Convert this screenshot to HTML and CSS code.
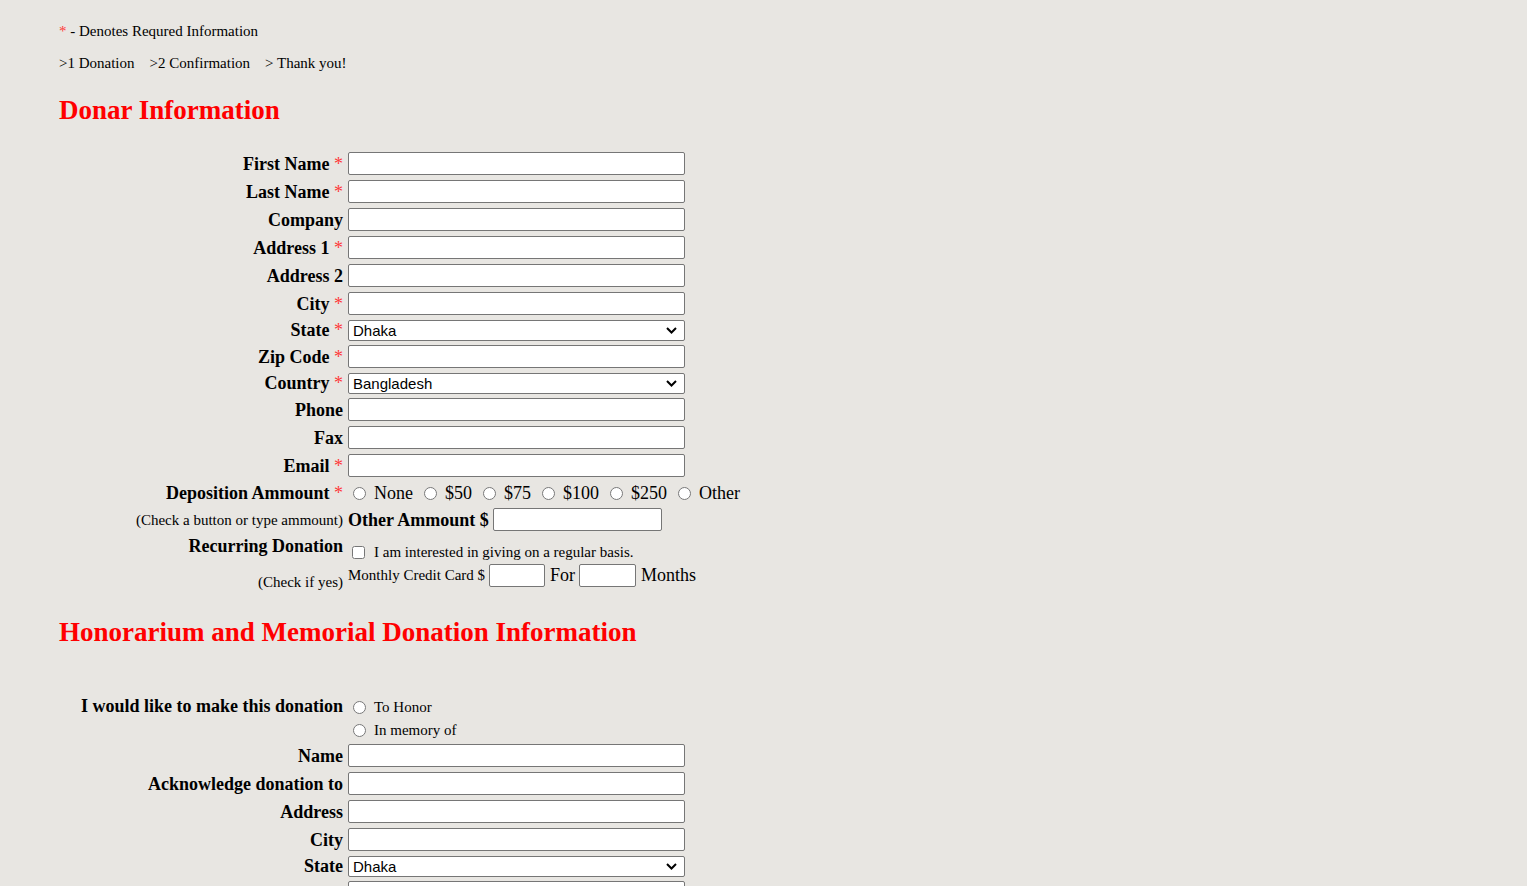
FILE: index.html
```html
<!DOCTYPE html>
<html lang="en">
<head>
<meta charset="utf-8">
<title>Donation</title>
<link rel="stylesheet" href="styles.css">
</head>
<body>
<div class="page">
  <p class="note"><span class="req">*</span> - Denotes Requred Information</p>
  <nav class="steps"><span>&gt;1 Donation</span><span>&gt;2 Confirmation</span><span>&gt; Thank you!</span></nav>

  <h2 class="section-title">Donar Information</h2>
  <div class="form-grid first-grid">
    <label class="lbl">First Name <span class="req">*</span></label><div class="ctl"><input class="txt" type="text"></div>
    <label class="lbl">Last Name <span class="req">*</span></label><div class="ctl"><input class="txt" type="text"></div>
    <label class="lbl">Company</label><div class="ctl"><input class="txt" type="text"></div>
    <label class="lbl">Address 1 <span class="req">*</span></label><div class="ctl"><input class="txt" type="text"></div>
    <label class="lbl">Address 2</label><div class="ctl"><input class="txt" type="text"></div>
    <label class="lbl">City <span class="req">*</span></label><div class="ctl"><input class="txt" type="text"></div>
    <label class="lbl">State <span class="req">*</span></label><div class="ctl"><select class="sel"><option>Dhaka</option></select></div>
    <label class="lbl">Zip Code <span class="req">*</span></label><div class="ctl"><input class="txt" type="text"></div>
    <label class="lbl">Country <span class="req">*</span></label><div class="ctl"><select class="sel"><option>Bangladesh</option></select></div>
    <label class="lbl">Phone</label><div class="ctl"><input class="txt" type="text"></div>
    <label class="lbl">Fax</label><div class="ctl"><input class="txt" type="text"></div>
    <label class="lbl">Email <span class="req">*</span></label><div class="ctl"><input class="txt" type="text"></div>

    <label class="lbl">Deposition Ammount <span class="req">*</span></label>
    <div class="ctl options">
      <label class="opt"><input type="radio" name="amt">None</label>
      <label class="opt"><input type="radio" name="amt">$50</label>
      <label class="opt"><input type="radio" name="amt">$75</label>
      <label class="opt"><input type="radio" name="amt">$100</label>
      <label class="opt"><input type="radio" name="amt">$250</label>
      <label class="opt"><input type="radio" name="amt">Other</label>
    </div>

    <span class="lbl hint">(Check a button or type ammount)</span>
    <div class="ctl other"><span class="inline-lbl">Other Ammount $</span><input class="txt w169" type="text"></div>

    <div class="lbl stack"><span>Recurring Donation</span><span class="hint">(Check if yes)</span></div>
    <div class="recur">
      <label class="recur-line"><input type="checkbox" class="chk">I am interested in giving on a regular basis.</label>
      <div class="monthly">
        <span class="small">Monthly Credit Card $</span><input class="txt w56" type="text"><span class="big">For</span><input class="txt w57" type="text"><span class="big">Months</span>
      </div>
    </div>
  </div>

  <h2 class="section-title second">Honorarium and Memorial Donation Information</h2>
  <div class="form-grid second-grid">
    <label class="lbl top">I would like to make this donation</label>
    <div class="choice">
      <label class="choice-line"><input type="radio" name="kind">To Honor</label>
      <label class="choice-line"><input type="radio" name="kind">In memory of</label>
    </div>
    <label class="lbl">Name</label><div class="ctl"><input class="txt" type="text"></div>
    <label class="lbl">Acknowledge donation to</label><div class="ctl"><input class="txt" type="text"></div>
    <label class="lbl">Address</label><div class="ctl"><input class="txt" type="text"></div>
    <label class="lbl">City</label><div class="ctl"><input class="txt" type="text"></div>
    <label class="lbl">State</label><div class="ctl"><select class="sel"><option>Dhaka</option></select></div>
    <label class="lbl">Message</label><div class="ctl"><textarea class="area"></textarea></div>
  </div>
</div>
</body>
</html>
```

FILE: styles.css
```css
* { box-sizing: border-box; }

body {
  margin: 0;
  background: #e8e6e2;
  font-family: "Liberation Serif", "Times New Roman", serif;
  font-size: 15px;
  color: #000;
}

.page {
  padding: 23px 0 40px 59px;
}

.note {
  margin: 0;
  line-height: 17px;
}

.req {
  color: #ff3838;
  font-weight: normal;
}

.steps {
  display: flex;
  gap: 15px;
  margin-top: 15px;
  line-height: 17px;
}

.section-title {
  margin: 23px 0 0;
  font-size: 27px;
  line-height: 31px;
  font-weight: bold;
  color: #ff0000;
}

.section-title.second {
  margin-top: 26px;
}

.form-grid {
  display: grid;
  grid-template-columns: 284px auto;
  column-gap: 5px;
  justify-content: start;
}

.first-grid { margin-top: 24px; }
.second-grid { margin-top: 48px; }

.lbl {
  font-weight: bold;
  font-size: 18px;
  line-height: 21px;
  text-align: right;
  align-self: center;
}

.lbl.hint, .hint {
  font-weight: normal;
  font-size: 15px;
  line-height: 17px;
}

.lbl.top { align-self: start; }

.lbl.stack {
  align-self: stretch;
  display: flex;
  flex-direction: column;
  justify-content: space-between;
  align-items: flex-end;
  padding-top: 2px;
}

.ctl {
  display: flex;
  align-items: center;
}

.txt {
  width: 337px;
  height: 23px;
  margin: 2px 0 3px;
  padding: 1px 4px;
  border: 1px solid #767676;
  border-radius: 2px;
  background: #fff;
  font: 15px "Liberation Sans", Arial, sans-serif;
}

.area {
  width: 337px;
  height: 60px;
  margin: 2px 0 3px;
  border: 1px solid #767676;
  border-radius: 2px;
  background: #fff;
  resize: none;
}

.sel {
  -webkit-appearance: none;
  appearance: none;
  width: 337px;
  height: 21px;
  margin: 2px 0;
  padding: 0 24px 0 4px;
  border: 1px solid #767676;
  border-radius: 2px;
  background: #fff url("data:image/svg+xml,%3Csvg xmlns='http://www.w3.org/2000/svg' width='11' height='7' viewBox='0 0 11 7'%3E%3Cpath d='M1 1l4.5 4.5L10 1' fill='none' stroke='%23000' stroke-width='2'/%3E%3C/svg%3E") no-repeat right 7px center;
  font: 15px "Liberation Sans", Arial, sans-serif;
  color: #000;
  line-height: 19px;
}

.options {
  min-height: 26px;
  gap: 6px;
  font-size: 18px;
}

.opt, .choice-line, .recur-line {
  display: inline-flex;
  align-items: center;
}

.opt input, .choice-line input {
  margin: 0 8px 0 5px;
  width: 13px;
  height: 13px;
}

.other { gap: 4px; }

.inline-lbl {
  font-weight: bold;
  font-size: 18px;
}

.w169 { width: 169px; }
.w56 { width: 56px; }
.w57 { width: 57px; }

.recur {
  padding-bottom: 3px;
}

.recur-line {
  display: flex;
  height: 28px;
  padding-top: 8px;
}

.recur-line .chk {
  margin: 0 9px 0 4px;
  width: 13px;
  height: 13px;
}

.monthly {
  display: flex;
  align-items: center;
  height: 26px;
}

.monthly .txt {
  margin: 0 5px 0 4px;
}

.monthly .big {
  font-size: 18px;
}

.choice {
  display: flex;
  flex-direction: column;
}

.choice-line {
  height: 23px;
}
```
